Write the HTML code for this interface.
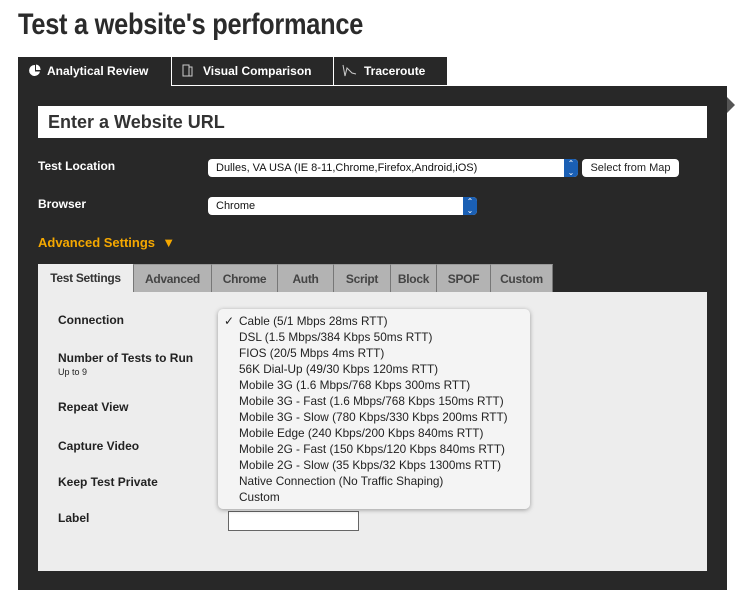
<!DOCTYPE html>
<html><head><meta charset="utf-8"><style>
*{margin:0;padding:0;box-sizing:border-box}
body{width:735px;height:600px;background:#fff;font-family:"Liberation Sans",Arial,sans-serif;position:relative;overflow:hidden}
.a{position:absolute}
h1{position:absolute;left:18px;top:8px;font-size:30px;font-weight:bold;color:#2b2b2b;transform:scaleX(0.845);transform-origin:left top;white-space:nowrap;letter-spacing:-0.3px}
.tab{position:absolute;top:57px;height:29px;background:#282828;color:#fff;font-size:12px;font-weight:bold;line-height:28px;border-left:1px solid #fff}
.tab.in{border-bottom:1px solid #fff}
.lbl{position:absolute;left:38px;color:#fff;font-size:12px;font-weight:bold}
.sel{position:absolute;background:#fff;border-radius:4px;font-size:11px;color:#111;line-height:18px;padding-left:8px;height:18px}
.sel .ar{position:absolute;right:0;top:0;width:14px;height:18px;background:#1a5fb4;border-radius:0 4px 4px 0;color:#fff;font-size:8px;text-align:center;line-height:9px}
.it{position:absolute;top:264px;height:28px;background:#b3b3b3;color:#444;font-size:12px;font-weight:bold;text-align:center;line-height:28px;border-left:1px solid #777;border-top:1px solid #999;letter-spacing:-0.3px}
.fl{position:absolute;left:58px;color:#222;font-size:12px;font-weight:bold}
.dd div{height:16px;line-height:16px;padding-left:21px;font-size:11.8px;color:#222}
</style></head><body>
<h1>Test a website's performance</h1>
<div class="a" style="left:18px;top:86px;width:709px;height:504px;background:#282828"></div>
<div class="a" style="left:727px;top:97px;width:0;height:0;border-top:8px solid transparent;border-bottom:8px solid transparent;border-left:8px solid #555"></div>
<div class="tab" style="left:18px;width:153px;border-left:none;padding-left:10px">
<svg width="13" height="13" viewBox="0 0 13 13" style="vertical-align:-2px;margin-right:6px"><path d="M6.5 1A5.5 5.5 0 1 0 12 7.5H7V1Z" fill="#fff"/><path d="M8 0.5V6H12.5A5 5 0 0 0 8 0.5Z" fill="#fff"/></svg>Analytical Review</div>
<div class="tab in" style="left:171px;width:162px;padding-left:10px">
<svg width="13" height="13" viewBox="0 0 13 13" style="vertical-align:-2px;margin-right:8px"><path d="M1 1H7V12H1Z M7 3H10V12H7" fill="none" stroke="#ccc"/></svg>Visual Comparison</div>
<div class="tab in" style="left:333px;width:115px;padding-left:8px;border-right:1px solid #fff">
<svg width="16" height="13" viewBox="0 0 16 13" style="vertical-align:-2px;margin-right:6px"><path d="M1 1L3 12L5 4L10 9L14 10" fill="none" stroke="#ccc" stroke-width="1"/></svg>Traceroute</div>
<div class="a" style="left:38px;top:106px;width:669px;height:32px;background:#fff;font-size:18px;font-weight:bold;color:#333;line-height:32px;padding-left:10px">Enter a Website URL</div>
<div class="lbl" style="top:159px">Test Location</div>
<div class="sel" style="left:208px;top:159px;width:370px">Dulles, VA USA (IE 8-11,Chrome,Firefox,Android,iOS)<div class="ar">⌃<br>⌄</div></div>
<div class="a" style="left:582px;top:159px;width:97px;height:18px;background:#fff;border-radius:4px;font-size:11px;color:#222;text-align:center;line-height:18px">Select from Map</div>
<div class="lbl" style="top:197px">Browser</div>
<div class="sel" style="left:208px;top:197px;width:269px">Chrome<div class="ar">⌃<br>⌄</div></div>
<div class="lbl" style="top:235px;color:#f5a800;font-size:13px">Advanced Settings &nbsp;▼</div>
<div class="a" style="left:38px;top:292px;width:669px;height:279px;background:#ededed"></div>
<div class="it" style="left:38px;width:95px;background:#ededed;color:#333;border-left:none;border-top:none">Test Settings</div>
<div class="it" style="left:133px;width:78px">Advanced</div>
<div class="it" style="left:211px;width:66px">Chrome</div>
<div class="it" style="left:277px;width:56px">Auth</div>
<div class="it" style="left:333px;width:57px">Script</div>
<div class="it" style="left:390px;width:46px">Block</div>
<div class="it" style="left:436px;width:54px">SPOF</div>
<div class="it" style="left:490px;width:63px;border-right:1px solid #777">Custom</div>
<div class="fl" style="top:313px">Connection</div>
<div class="fl" style="top:351px">Number of Tests to Run<div style="font-size:9px;font-weight:normal;margin-top:2px">Up to 9</div></div>
<div class="fl" style="top:400px">Repeat View</div>
<div class="fl" style="top:439px">Capture Video</div>
<div class="fl" style="top:475px">Keep Test Private</div>
<div class="fl" style="top:511px">Label</div>
<div class="a" style="left:228px;top:511px;width:131px;height:20px;background:#fff;border:1px solid #666"></div>
<div class="a dd" style="left:218px;top:309px;width:312px;height:200px;background:#f4f4f4;border-radius:5px;box-shadow:0 1px 5px rgba(0,0,0,.35);padding-top:4px">
<div style="position:relative"><span style="position:absolute;left:6px">✓</span>Cable (5/1 Mbps 28ms RTT)</div>
<div>DSL (1.5 Mbps/384 Kbps 50ms RTT)</div>
<div>FIOS (20/5 Mbps 4ms RTT)</div>
<div>56K Dial-Up (49/30 Kbps 120ms RTT)</div>
<div>Mobile 3G (1.6 Mbps/768 Kbps 300ms RTT)</div>
<div>Mobile 3G - Fast (1.6 Mbps/768 Kbps 150ms RTT)</div>
<div>Mobile 3G - Slow (780 Kbps/330 Kbps 200ms RTT)</div>
<div>Mobile Edge (240 Kbps/200 Kbps 840ms RTT)</div>
<div>Mobile 2G - Fast (150 Kbps/120 Kbps 840ms RTT)</div>
<div>Mobile 2G - Slow (35 Kbps/32 Kbps 1300ms RTT)</div>
<div>Native Connection (No Traffic Shaping)</div>
<div>Custom</div>
</div>
</body></html>
